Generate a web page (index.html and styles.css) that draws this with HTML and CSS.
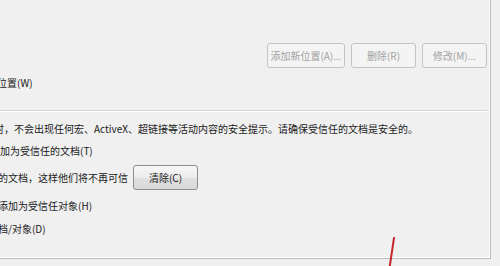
FILE: index.html
```html
<!DOCTYPE html>
<html>
<head>
    <title>受信任的文档</title>
    <link rel="stylesheet" href="styles.css">
</head>
<body>
    <div class="frame">
        <div class="button-row">
            <button class="win-button" disabled>添加新位置(A)...</button>
            <button class="win-button small" disabled>删除(R)</button>
            <button class="win-button small" disabled>修改(M)...</button>
        </div>

        <div class="line first-option cut-3">位置(W)</div>

        <div class="separator"></div>

        <div class="line info cut-6">时，不会出现任何宏、ActiveX、超链接等活动内容的安全提示。请确保受信任的文档是安全的。</div>
        <div class="line trusted">加为受信任的文档(T)</div>

        <div class="clear-row">
            <span class="line cut-2">的文档，这样他们将不再可信</span>
            <button class="win-button active">清除(C)</button>
        </div>

        <div class="line object cut-2">添加为受信任对象(H)</div>
        <div class="line last cut-2">档/对象(D)</div>
    </div>

    <!-- 红色标注线 -->
    <svg class="mark" width="12" height="32" viewBox="0 0 12 32">
        <line x1="7" y1="2" x2="2.5" y2="32" stroke="#c4262b" stroke-width="2" stroke-linecap="round"/>
    </svg>
</body>
</html>
```

FILE: styles.css
```css
body {
    margin: 0;
    width: 500px;
    height: 266px;
    overflow: hidden;
    position: relative;
    background-color: #f0f0f0;
    font-family: "Noto Sans CJK SC", "Noto Sans", sans-serif;
    font-size: 10px;
    color: #1a1a1a;
}

.frame {
    width: 491px;
    height: 259px;
    border-right: 1px solid #bdbdbd;
    border-bottom: 1px solid #bdbdbd;
    box-shadow: inset -1px -1px 0 #ffffff;
    box-sizing: border-box;
    padding-top: 43px;
}

.button-row {
    display: flex;
    justify-content: flex-end;
    gap: 6px;
    padding-right: 3px;
}

.win-button {
    height: 25px;
    width: 78px;
    padding: 0;
    font-family: inherit;
    font-size: 10px;
    border-radius: 3px;
    box-sizing: border-box;
}

.win-button.small {
    width: 65px;
}

.win-button:disabled {
    background-color: #f4f4f4;
    border: 1px solid #c3c3c3;
    color: #a3a3a3;
}

.win-button.active {
    width: 65px;
    margin-left: 5px;
    border: 1px solid #8e8e8e;
    color: #1a1a1a;
    background: linear-gradient(#f7f7f7, #ececec 50%, #e0e0e0 51%, #d9d9d9);
}

.line {
    display: block;
    line-height: 14px;
    white-space: nowrap;
}

.cut-2 { margin-left: -2px; }
.cut-3 { margin-left: -3px; }
.cut-6 { margin-left: -6px; }

.first-option {
    margin-top: 8px;
}

.separator {
    width: 487px;
    margin-top: 20px;
    border-top: 1px solid #d2d2d2;
    border-bottom: 1px solid #ffffff;
}

.info {
    margin-top: 10px;
}

.trusted {
    margin-top: 8px;
}

.clear-row {
    display: flex;
    align-items: center;
    margin-top: 7px;
}

.object {
    margin-top: 9px;
}

.last {
    margin-top: 9px;
}

.mark {
    position: absolute;
    left: 387px;
    top: 236px;
}
```
